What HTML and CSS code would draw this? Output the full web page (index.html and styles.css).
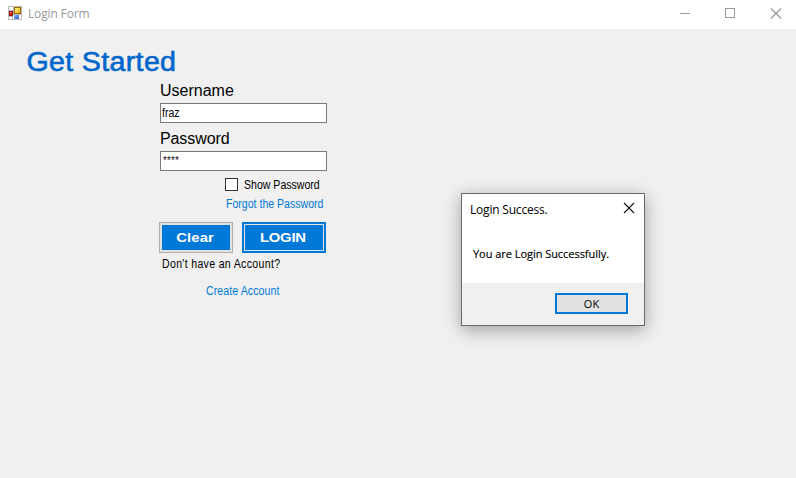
FILE: index.html
```html
<!DOCTYPE html>
<html lang="en">
<head>
<meta charset="utf-8">
<title>Login Form</title>
<link rel="stylesheet" href="styles.css">
</head>
<body>
<div class="window">
  <header class="titlebar">
    <svg class="app-icon" width="14" height="14" viewBox="0 0 14 14" shape-rendering="crispEdges">
      <defs>
        <linearGradient id="gold" x2="1" y2="1"><stop stop-color="#fff0a0"/><stop offset=".5" stop-color="#ffd04a"/><stop offset="1" stop-color="#edaa10"/></linearGradient>
        <linearGradient id="blue" x2="1" y2="1"><stop stop-color="#8cb8ff"/><stop offset="1" stop-color="#235bd0"/></linearGradient>
      </defs>
      <path fill="#b9b9b9" d="M0 0h14v14H0z"/>
      <path fill="#fff" d="M1 1h4v3H1zM1 11h3v2H1zM5 9h8v4H5z"/>
      <path fill="#8e1710" d="M1 5h4v5H1z"/><path fill="#d52d22" d="M2 6h2v3H2z"/><path fill="#ff9990" d="M2 6h1v1H2z"/>
      <path fill="#9b6c00" d="M6 1h7v7H6z"/><path fill="url(#gold)" d="M7 2h5v5H7z"/>
      <path fill="url(#blue)" d="M6 9h5v4H6z"/>
    </svg>
    <span class="caption">Login Form</span>
    <svg class="controls" width="102" height="12" viewBox="0 0 102 12" fill="none" stroke="#999">
      <path d="M0 5.5h10M45.500 .5h9v9h-9z" shape-rendering="crispEdges"/>
      <path d="M91 .5l10 10M101 .5l-10 10" stroke-width="1.2"/>
    </svg>
  </header>
  <main class="content">
    <h1><span class="heading">Get Started</span></h1>
    <form class="form">
      <label class="label" for="user">Username</label>
      <div class="field" id="user"><span class="small">fraz</span></div>
      <label class="label label-password" for="pass">Password</label>
      <div class="field field-password" id="pass"><span class="small mask">****</span></div>
      <div class="show"><span class="checkbox"></span><span class="small">Show Password</span></div>
      <a class="link forgot"><span class="small">Forgot the Password</span></a>
      <div class="buttons">
        <div class="button clear"><span>Clear</span></div>
        <div class="button login"><span>LOGIN</span></div>
      </div>
      <div class="question"><span class="small small-wide">Don't have an Account?</span></div>
      <a class="link create"><span class="small">Create Account</span></a>
    </form>
  </main>
  <section class="dialog" role="dialog">
    <div class="dialog-head">
      <span class="dialog-title">Login Success.</span>
      <svg width="12" height="12" viewBox="0 0 12 12" stroke="#111" stroke-width="1.1"><path d="M1 1l10 10M11 1L1 11"/></svg>
    </div>
    <div class="dialog-message"><span>You are Login Successfully.</span></div>
    <div class="dialog-footer"><div class="ok">OK</div></div>
  </section>
</div>
</body>
</html>
```
FILE: styles.css
```css
* { box-sizing: border-box; }
body { margin: 0; font-family: "Liberation Sans", Arial, sans-serif; color: #000; }
.window { position: relative; width: 796px; height: 478px; background: #f0f0f0; overflow: hidden; }
.titlebar { display: flex; align-items: flex-start; height: 29px; padding: 6px 14px 0 8px; background: #fff; }
.app-icon { display: block; }
.caption { margin-left: 6px; font: 12px/16px "Open Sans", "Noto Sans", sans-serif; letter-spacing: -.15px; color: #999; white-space: nowrap; }
.controls { display: block; margin: 2px 0 0 auto; }
.content { padding: 15px 0 0 26px; }
h1 { margin: 0; height: 36px; font-size: 27px; line-height: 36px; font-weight: 400; color: #0066cc; }
.heading { display: inline-block; letter-spacing: .3px; transform: translateX(.5px) scaleX(1.06); transform-origin: left; -webkit-text-stroke: .6px #0066cc; }
.form { display: flex; flex-direction: column; width: 167px; margin-left: 134px; }
.label { height: 23px; font-size: 16px; line-height: 21px; }
.label-password { height: 28px; line-height: 32px; letter-spacing: -.1px; }
.field { display: flex; height: 20px; padding: 0 0 0 1px; border: 1px solid #7a7a7a; background: #fff; line-height: 18px; }
.field-password { padding-left: 2px; line-height: 16px; }
.small { display: inline-block; font-size: 12px; white-space: nowrap; transform: scaleX(.88); transform-origin: left center; }
.mask { font-size: 11px; letter-spacing: .3px; }
.small-wide { letter-spacing: .37px; }
.show { display: flex; align-items: center; height: 13px; margin: 7px 0 0 65px; gap: 6px; line-height: 15px; }
.show .small { height: 13px; }
.checkbox { flex: none; width: 13px; height: 13px; border: 1px solid #333; background: #fff; }
.link { display: block; height: 16px; line-height: 16px; color: #0078d7; }
.forgot { margin: 4px 0 0 66px; }
.buttons { display: flex; gap: 9px; margin: 11px 0 0 -1px; }
.button { display: flex; align-items: center; justify-content: center; height: 31px; color: #fff; font-size: 13.5px; font-weight: 700; background: #0078d7; }
.clear { width: 74px; border: 1px solid #adadad; box-shadow: inset 0 0 0 2px #e1e1e1; }
.login { width: 84px; border: 2px solid #0078d7; box-shadow: inset 0 0 0 1px #e1e1e1; }
.button span { line-height: 16px; transform: translateX(-1px) scaleX(1.1); }
.login span { letter-spacing: -.2px; }
.clear span { letter-spacing: .1px; }
.question { height: 16px; margin: 2px 0 0 2px; line-height: 16px; }
.create { margin: 11px 0 0 46px; }
.create .small { letter-spacing: .1px; }
.dialog { position: absolute; left: 461px; top: 193px; width: 184px; height: 133px; border: 1px solid #6a6a6a; background: #fff; box-shadow: 0 4px 16px rgba(0,0,0,.34); font-family: "Open Sans", "Noto Sans", sans-serif; }
.dialog-head { display: flex; justify-content: space-between; height: 30px; padding: 8px 9px 0 8px; font-size: 12px; line-height: 15px; letter-spacing: -.2px; white-space: nowrap; }
.dialog-message { height: 59px; padding: 22px 0 0 11px; font-size: 11px; line-height: 16px; letter-spacing: -.04px; white-space: nowrap; -webkit-text-stroke: .15px #000; }
.dialog-footer { display: flex; justify-content: flex-end; height: 42px; padding: 10px 16px 0 0; background: #f0f0f0; }
.ok { width: 73px; height: 21px; border: 2px solid #0078d7; background: #e1e1e1; text-align: center; font-size: 11px; line-height: 18px; }
```
